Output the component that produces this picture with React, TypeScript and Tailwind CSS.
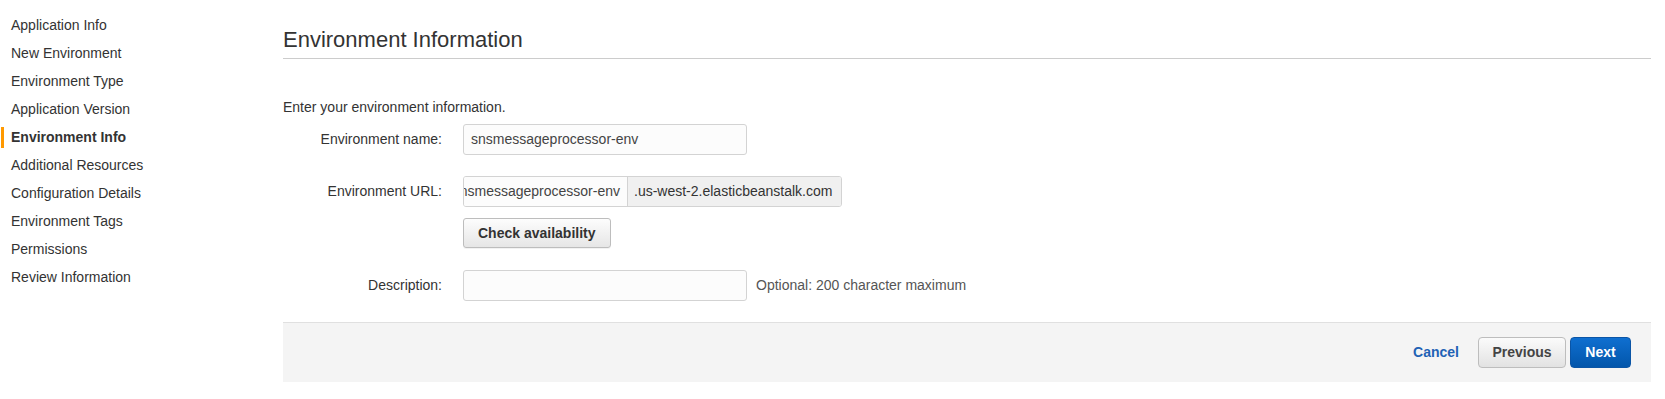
import React from 'react';

const steps = [
    'Application Info',
    'New Environment',
    'Environment Type',
    'Application Version',
    'Environment Info',
    'Additional Resources',
    'Configuration Details',
    'Environment Tags',
    'Permissions',
    'Review Information',
];

const ACTIVE = 'Environment Info';

const Sidebar: React.FC = () => (
    <nav className="w-[283px] shrink-0 pt-[11px] pl-[1px]">
        {steps.map((s) => (
            <div key={s} className="flex items-center h-[28px]">
                <span className={`w-[3px] h-[21px] ${s === ACTIVE ? 'bg-[#f90]' : 'bg-transparent'}`} />
                <span className={`ml-[7px] text-[14px] text-[#333] ${s === ACTIVE ? 'font-bold' : ''}`}>{s}</span>
            </div>
        ))}
    </nav>
);

const FormRow: React.FC<{ label?: string; children: React.ReactNode; className?: string }> = ({ label, children, className }) => (
    <div className={`flex items-center ${className ?? ''}`}>
        <div className="w-[159px] mr-[21px] text-right text-[14px] text-[#333]">{label}</div>
        {children}
    </div>
);

export default function App() {
    return (
        <div className="flex bg-white min-h-[399px] text-[#333]" style={{ fontFamily: '"Liberation Sans", Arial, Helvetica, sans-serif' }}>
            <Sidebar />
            <main className="flex-1 pr-[14px]">
                <h2 className="mt-[27px] leading-[26px] pb-[5px] text-[22px] text-[#333] border-b border-[#ccc]">
                    Environment Information
                </h2>

                <p className="mt-[38px] leading-[20px] text-[14px] text-[#333]">Enter your environment information.</p>

                <FormRow label="Environment name:" className="mt-[7px]">
                    <div className="w-[284px] h-[31px] flex items-center px-[7px] bg-[#fcfcfc] border border-[#d3d3d3] rounded-[3px] text-[14px] text-[#444]">
                        snsmessageprocessor-env
                    </div>
                </FormRow>

                <FormRow label="Environment URL:" className="mt-[21px]">
                    <div className="flex h-[31px] border border-[#d3d3d3] rounded-[3px] text-[14px] overflow-hidden">
                        <div className="w-[163px] flex justify-end items-center overflow-hidden whitespace-nowrap pr-[7px] bg-[#fcfcfc] text-[#444]">
                            <span className="shrink-0">snsmessageprocessor-env</span>
                        </div>
                        <div className="flex items-center px-[6px] bg-[#f0f0f0] border-l border-[#d3d3d3] text-[#333] whitespace-nowrap w-[214px]">
                            .us-west-2.elasticbeanstalk.com
                        </div>
                    </div>
                </FormRow>

                <FormRow className="mt-[11px]">
                    <button className="h-[30px] px-[14px] border border-[#bdbdbd] rounded-[3px] bg-gradient-to-b from-[#fdfdfd] to-[#e6e6e6] text-[14px] font-bold text-[#333] shadow-[0_1px_0_rgba(0,0,0,0.05)]">
                        Check availability
                    </button>
                </FormRow>

                <FormRow label="Description:" className="mt-[22px]">
                    <div className="w-[284px] h-[31px] bg-[#fcfcfc] border border-[#d3d3d3] rounded-[3px]" />
                    <span className="ml-[9px] text-[14px] text-[#555]">Optional: 200 character maximum</span>
                </FormRow>

                <div className="mt-[21px] h-[60px] bg-[#f4f4f4] border-t border-[#e0e0e0] flex items-center justify-end pr-[20px]">
                    <button className="text-[14px] font-bold text-[#1f62b5] mr-[19px]">Cancel</button>
                    <button className="h-[31px] w-[88px] border border-[#bdbdbd] rounded-[4px] bg-gradient-to-b from-[#fbfbfb] to-[#e2e2e2] text-[14px] font-bold text-[#444]">
                        Previous
                    </button>
                    <button className="ml-[4px] h-[31px] w-[61px] border border-[#0b55a6] rounded-[4px] bg-gradient-to-b from-[#0f6fd0] to-[#0356ab] text-[14px] font-bold text-white">
                        Next
                    </button>
                </div>
            </main>
        </div>
    );
}
